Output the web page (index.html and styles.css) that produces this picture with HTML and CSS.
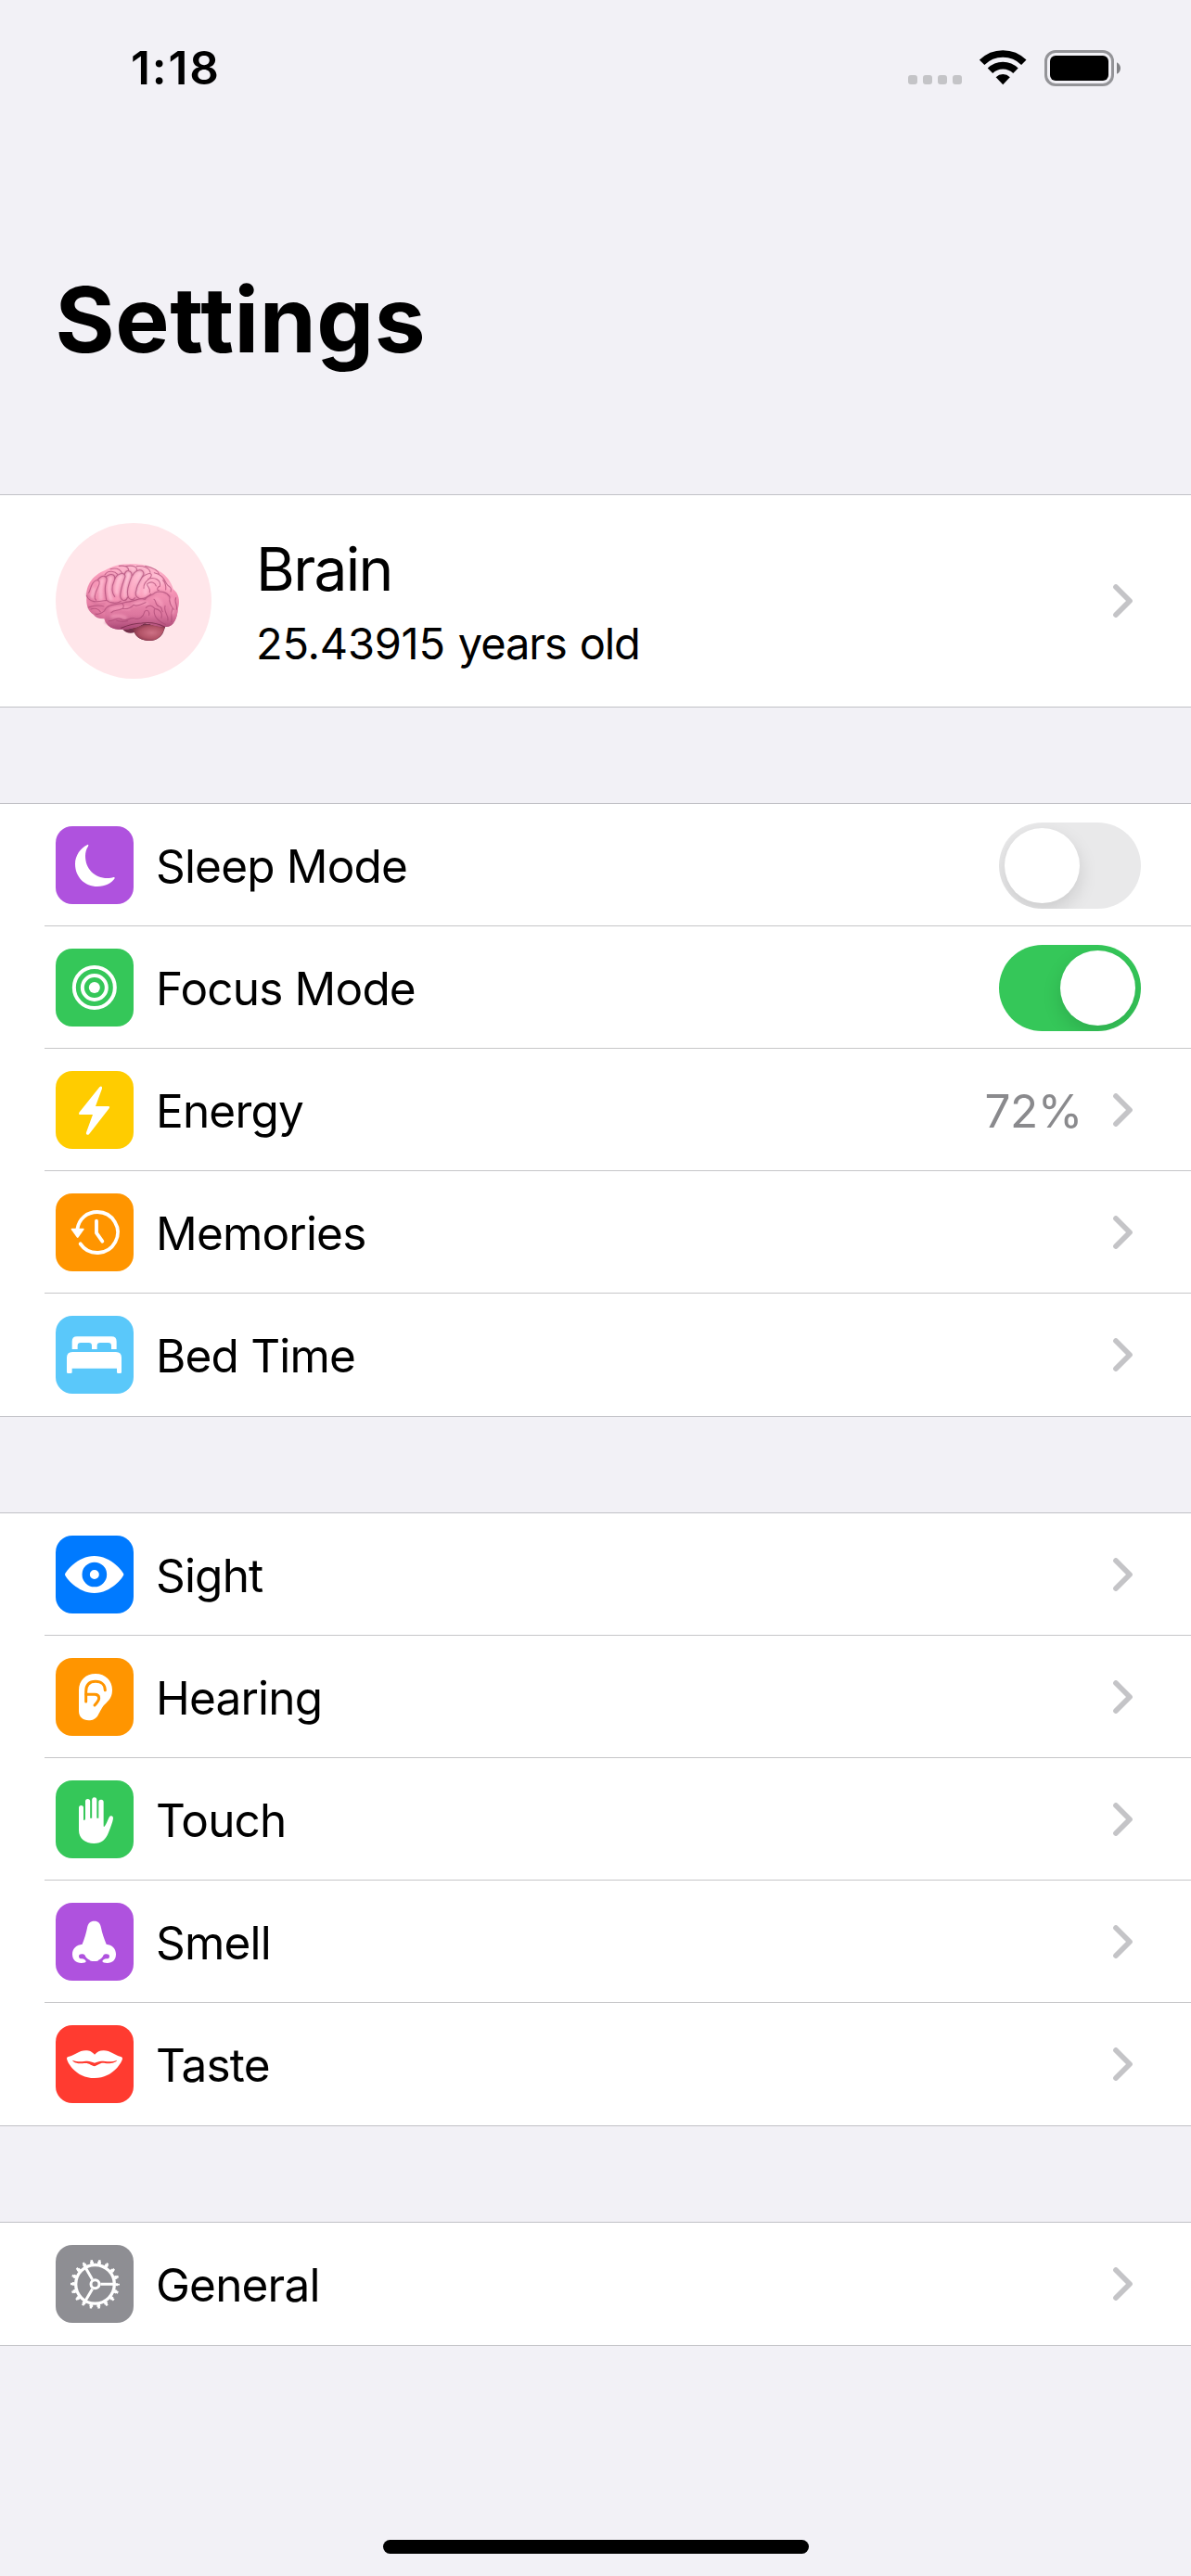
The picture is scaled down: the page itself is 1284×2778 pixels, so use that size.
FILE: index.html
```
<!DOCTYPE html>
<html lang="en">
<head>
<meta charset="utf-8">
<title>Settings</title>
<link rel="stylesheet" href="styles.css">
</head>
<body>
<svg class="defs" aria-hidden="true">
  <symbol id="chevron" viewBox="0 0 63 108"><path d="M9 9L54 54L9 99" fill="none" stroke="#c4c4c7" stroke-width="17" stroke-linecap="round" stroke-linejoin="round"/></symbol>
</svg>

<div class="screen">
  <header class="status">
    <span class="time">1:18</span>
    <div class="indicators">
      <div class="signal"><i></i><i></i><i></i><i></i></div>
      <svg class="wifi" viewBox="0 0 151 112"><g fill="none" stroke="#000" stroke-width="23"><path d="M8 40A96 96 0 0 1 143.500 40"/><path d="M34.500 67A58 58 0 0 1 117 67"/></g><path d="M53 87.500A33 33 0 0 1 98.500 87.500L75.800 112Z"/></svg>
      <div class="battery"><div class="cell"><div class="charge"></div></div><svg class="nub" viewBox="0 0 12 38"><path d="M0 0C8 4 12 11 12 19S8 34 0 38Z" fill="#818185"/></svg></div>
    </div>
  </header>

  <h1 class="title">Settings</h1>

  <main class="groups">
    <section class="group">
      <div class="profile">
        <div class="avatar">
          <svg class="brain" viewBox="0 0 360 312">
            <defs>
              <radialGradient id="cortex" cx=".55" cy=".12" r=".95"><stop offset="0" stop-color="#ffc0d4"/><stop offset=".42" stop-color="#fb9fbd"/><stop offset=".75" stop-color="#e87fa5"/><stop offset="1" stop-color="#b04f7c"/></radialGradient>
              <linearGradient id="lobe" x1="0" y1="0" x2="0" y2="1"><stop offset="0" stop-color="#f593b5"/><stop offset=".6" stop-color="#dc769e"/><stop offset="1" stop-color="#a84674"/></linearGradient>
              <radialGradient id="stem" cx=".6" cy=".5" r=".6"><stop offset="0" stop-color="#cd7084"/><stop offset=".6" stop-color="#b35468"/><stop offset="1" stop-color="#803248"/></radialGradient>
              <filter id="soft" x="-5%" y="-5%" width="110%" height="110%"><feGaussianBlur stdDeviation="2.500"/></filter>
              <filter id="softer" x="-5%" y="-5%" width="110%" height="110%"><feGaussianBlur stdDeviation="4"/></filter>
            </defs>
            <path d="M143 246C155 262 172 262 183 258C188 274 206 285 232 285C257 285 270 271 276 258L283 239L215 228Z" fill="#74304a"/>
            <path d="M176 244C184 270 202 285 230 285C258 285 273 269 281 240C245 230 202 230 176 244Z" fill="url(#stem)"/>
            <path d="M28 145C24 105 50 71 88 57C110 45 133 37 163 37C195 34 226 41 250 53C280 66 300 88 308 118C326 132 331 156 324 180C322 210 311 239 286 240C260 242 241 231 216 228C190 245 154 252 120 247C101 243 88 229 85 214C70 215 57 209 50 200C33 190 26 170 28 145Z" fill="url(#cortex)"/>
            <path d="M88 190C92 170 122 165 150 162C181 158 196 145 221 147C240 133 270 124 295 136C317 130 328 160 323 180C322 211 310 240 286 240C260 242 241 231 216 228C190 245 154 252 120 247C96 242 84 219 88 190Z" fill="url(#lobe)"/>
            <g fill="none" stroke-linecap="round" stroke-linejoin="round">
              <g stroke="#ffd5e3" stroke-width="9" opacity=".6" filter="url(#softer)"><path d="M51 116L45 144M78 88Q71 120 74 150M105 82Q98 118 106 152M142 67Q123 102 126 132M164 67Q151 107 156 143M205 74Q190 105 192 132M230 100Q213 126 219 134M245 73Q264 72 270 100M292 99L299 116"/><path d="M106 183Q138 173 165 180M180 168Q204 160 225 165M250 149Q267 150 270 170M302 149Q309 170 306 195M110 207Q135 201 155 211" stroke="#ffadc8"/></g>
              <g stroke="#c4628d" stroke-width="7" opacity=".45" filter="url(#soft)">
                <path d="M64 88C82 67 99 76 91 98C84 120 90 137 92 153C102 164 127 166 139 157"/>
                <path d="M92 77C110 64 125 72 117 92C107 112 110 132 119 142"/>
                <path d="M119 86C126 67 151 60 153 77C145 100 137 118 137 142C142 158 155 159 161 144"/>
                <path d="M151 71C154 51 177 57 174 77C164 101 157 122 161 138C164 153 179 156 184 146"/>
                <path d="M176 75C190 49 213 53 213 70C203 88 190 105 189 121C184 133 187 143 198 148"/>
                <path d="M86 188C94 163 133 169 156 160C184 159 198 143 217 151C224 137 244 138 249 130C266 121 288 128 297 143"/>
                <path d="M29 134C46 157 48 172 88 165M36 178C50 169 77 174 84 186"/>
                <path d="M89 226C125 238 147 217 173 224C201 230 213 219 216 207"/>
              </g>
              <g stroke="#a84672" stroke-width="3.300" opacity=".66">
                <path d="M35 130C43 117 41 97 58 90C72 86 72 98 65 112C56 130 51 149 59 154"/>
                <path d="M64 88C82 67 99 76 91 98C84 120 90 137 92 153C102 164 127 166 139 157"/>
                <path d="M92 77C110 64 125 72 117 92C107 112 110 132 119 142"/>
                <path d="M119 86C126 67 151 60 153 77C145 100 137 118 137 142C142 158 155 159 161 144"/>
                <path d="M151 71C154 51 177 57 174 77C164 101 157 122 161 138C164 153 179 156 184 146"/>
                <path d="M176 75C190 49 213 53 213 70C203 88 190 105 189 121C184 133 187 143 198 148C212 151 228 143 236 134"/>
                <path d="M208 79C235 59 246 68 231 84C220 94 212 100 213 115M227 85C250 77 270 91 265 109C252 113 258 125 262 121"/>
                <path d="M232 129C236 111 222 111 224 101C238 90 250 98 253 108M247 65C278 72 279 91 290 105C301 113 303 117 300 126M275 89Q286 100 284 120"/>
                <path d="M87 72C98 53 122 62 128 70M105 53C123 48 136 53 143 66M133 43C150 41 164 45 164 57M153 44C182 39 193 47 190 59M190 44C211 42 231 48 234 64M218 43C243 49 259 57 262 69"/>
                <path d="M28 139C39 166 68 158 92 154M34 177C49 174 59 166 84 174M42 183C53 178 68 181 73 192M57 198Q69 202 84 190"/>
                <path d="M86 188C94 163 133 169 156 160C184 159 198 143 217 151C224 137 244 138 249 130C266 121 288 128 297 143C293 161 302 173 310 184"/>
                <path d="M108 194C119 182 127 191 144 181C164 184 174 176 180 169C193 177 206 166 219 161M145 181Q151 171 144 166"/>
                <path d="M100 221C118 222 127 207 140 215C155 225 164 211 181 212C199 219 212 207 216 190C225 182 232 190 230 202M125 220Q144 226 161 221"/>
                <path d="M246 151C255 156 248 170 263 174C276 177 267 186 274 191M220 178C231 166 241 173 249 181C263 183 275 194 270 211M247 184C244 207 260 222 283 232M282 172C276 192 294 201 291 219M317 146C310 159 324 171 319 184M306 181C297 201 307 213 302 224"/>
                <path d="M140 244Q174 229 206 228Q246 222 280 240" stroke="#642039"/>
              </g>
            </g>
          </svg>
        </div>
        <div class="who"><span class="name">Brain</span><span class="age"><span class="number">25.43915</span> years old</span></div>
        <svg class="chevron"><use href="#chevron"/></svg>
      </div>
    </section>

    <section class="group">
      <div class="row toggle-row">
        <svg class="icon purple" viewBox="0 0 252 252"><path d="M103 60C80 71 63 95 63 122C63 164 94 195 135 195C161 195 181 184 191 169Q192 164 187 165C182 167 175 168 167 168C126 168 96 138 96 96C96 84 99 74 105 65Q108 58 103 60Z"/></svg>
        <span class="label">Sleep Mode</span>
        <div class="switch"><div class="knob"></div></div>
      </div>
      <div class="row toggle-row">
        <svg class="icon green" viewBox="0 0 252 252"><g class="line" stroke-width="12"><circle cx="125.500" cy="126" r="66"/><circle cx="125.500" cy="126" r="39"/></g><circle cx="125.500" cy="126" r="18"/></svg>
        <span class="label">Focus Mode</span>
        <div class="switch on"><div class="knob"></div></div>
      </div>
      <div class="row">
        <svg class="icon yellow" viewBox="0 0 252 252"><path d="M142 52L76 134Q73 141 80 141H120L99 199C97 207 104 209 109 203L173 121Q177 114 170 114H129L150 57C151 49 146 48 142 52Z"/></svg>
        <span class="label">Energy</span>
        <span class="value">72%</span>
        <svg class="chevron"><use href="#chevron"/></svg>
      </div>
      <div class="row">
        <svg class="icon orange" viewBox="0 0 252 252"><g class="line" stroke-width="11.500"><path d="M70 116C75 82 101 60 135 60A66 66 0 1 1 80 163"/><path d="M132 89V128L151 155"/></g><path d="M52 113H90Q94 113 91 118L74 142Q71 146 68 142L51 118Q48 113 52 113Z"/></svg>
        <span class="label">Memories</span>
        <svg class="chevron"><use href="#chevron"/></svg>
      </div>
      <div class="row">
        <svg class="icon sky" viewBox="0 0 252 252"><path d="M53 108V83Q53 67 69 67H181Q197 67 197 83V108H180V97Q180 87 170 87H144Q134 87 134 97V108H117V97Q117 87 107 87H81Q71 87 71 97V108Z"/><path d="M36 182V135Q36 117 54 117H195Q213 117 213 135V182Q213 186 209 186H202Q198 186 198 182V170H53V182Q53 186 49 186H40Q36 186 36 182Z"/></svg>
        <span class="label">Bed Time</span>
        <svg class="chevron"><use href="#chevron"/></svg>
      </div>
    </section>

    <section class="group">
      <div class="row">
        <svg class="icon blue" viewBox="0 0 252 252"><path d="M30 126C30 118 71 66 125 66S220 118 220 126S179 186 125 186S30 134 30 126Z"/><circle cx="125.500" cy="126" r="27.500" fill="none" stroke="#007aff" stroke-width="25"/></svg>
        <span class="label">Sight</span>
        <svg class="chevron"><use href="#chevron"/></svg>
      </div>
      <div class="row">
        <svg class="icon orange" viewBox="0 0 252 252"><path d="M75 105C75 72 97 51 129 51C161 51 183 74 183 103C183 123 177 133 163 146C149 158 145 172 137 185C130 197 119 202 107 202C88 202 75 191 75 172Z"/><g class="line" stroke="#ff9500" stroke-width="9"><path d="M98 141V109C98 88 109 76 129 76C149 76 160 88 160 104"/><path d="M98 118H126Q140 118 140 130Q140 139 126 153"/></g></svg>
        <span class="label">Hearing</span>
        <svg class="chevron"><use href="#chevron"/></svg>
      </div>
      <div class="row">
        <svg class="icon green" viewBox="0 0 252 252"><path d="M75 162V88.500A7.500 7.500 0 0 1 90 88.500V126Q90 130 93 129Q96 128 96 124V67.500A7.500 7.500 0 0 1 111.500 67.500V122H117.500V61.500A7.800 7.800 0 0 1 133 61.500V122H139V70.500A7.800 7.800 0 0 1 155 70.500V147Q155 152 159 148C164 141 169 127 173 119Q176 114 181 115Q187 117 186 124C184 136 178 152 171 169C162 192 149 204 124 204C96 204 75 188 75 162Z"/></svg>
        <span class="label">Touch</span>
        <svg class="chevron"><use href="#chevron"/></svg>
      </div>
      <div class="row">
        <svg class="icon purple" viewBox="0 0 252 252"><path d="M125 59C138 59 144 66 147 81C150 98 157 117 164 134C182 136 195 148 195 166C195 185 184 195 167 195C158 195 152 193 150 189C144 186 138 189 125 189S106 186 100 189C98 193 92 195 83 195C66 195 54 185 54 166C54 148 68 136 86 134C93 117 99 98 102 81C105 66 112 59 125 59Z"/><g fill="#af52de"><path d="M75 173C75 164 90 165 94 169C97 178 105 184 113 187Q107 193 99 193C97 184 92 181 84 181C78 181 75 178 75 173Z"/><path d="M174 173C174 164 159 165 155 169C152 178 144 184 136 187Q142 193 150 193C152 184 157 181 165 181C171 181 174 178 174 173Z"/></g></svg>
        <span class="label">Smell</span>
        <svg class="chevron"><use href="#chevron"/></svg>
      </div>
      <div class="row">
        <svg class="icon red" viewBox="0 0 252 252"><path d="M36 107C36 103 39 102 44 101C64 97 74 82 97 82C111 82 117 86 126 95C135 86 142 82 155 82C178 82 190 97 208 101C213 102 216 103 216 108C216 116 188 171 126 171S36 118 36 107Z"/><path d="M54 113C66 118 80 119 92 117C108 114 114 118 126 122C138 118 142 114 160 117C175 119 188 118 198 113C197 121 175 126 160 123C142 120 138 130 126 133C114 130 108 121 92 123C78 126 57 122 54 113Z" fill="#ff3b30"/></svg>
        <span class="label">Taste</span>
        <svg class="chevron"><use href="#chevron"/></svg>
      </div>
    </section>

    <section class="group">
      <div class="row">
        <svg class="icon gray" viewBox="0 0 252 252"><g fill="none" stroke="#fff"><circle cx="127.500" cy="127" r="62.500" stroke-width="10"/><circle cx="127.500" cy="127" r="70" stroke-width="8" pathLength="18" stroke-dasharray=".46 .54" stroke-dashoffset=".23"/><circle cx="127.500" cy="127" r="75" stroke-width="9" pathLength="18" stroke-dasharray=".28 .72" stroke-dashoffset=".14"/><circle cx="127.500" cy="127" r="13.500" stroke-width="9"/><path d="M145 127H188M118.700 111.800L97 74.500M118.700 142.200L97 179.500" stroke-width="9"/></g></svg>
        <span class="label">General</span>
        <svg class="chevron"><use href="#chevron"/></svg>
      </div>
    </section>
  </main>

  <footer class="home"><div class="home-bar"></div></footer>
</div>
</body>
</html>
```

FILE: styles.css
```
* { box-sizing: border-box; }

body {
  margin: 0;
  background: #f2f1f6;
  color: #000;
  font-family: Inter, "Liberation Sans", sans-serif;
}

.defs { display: none; }

.screen {
  display: flex;
  flex-direction: column;
  width: 1284px;
  height: 2778px;
  overflow: hidden;
}

/* Status bar */
.status {
  display: flex;
  align-items: center;
  justify-content: space-between;
  height: 146px;
  padding: 0 76px 0 141px;
}

.time {
  font-size: 49.5px;
  font-weight: 600;
  letter-spacing: 1.9px;
  line-height: 60px;
}

.indicators { display: flex; align-items: center; }

.signal { display: flex; gap: 6px; margin: 26px 19px 0 0; }

.signal i {
  width: 10px;
  height: 10px;
  border-radius: 3px;
  background: #c4c4c7;
}

.wifi { width: 50.300px; height: 37.300px; margin-right: 19.400px; }

.battery { display: flex; align-items: center; gap: 3px; }

.cell {
  width: 75px;
  height: 39px;
  padding: 3px;
  border: 3px solid #949498;
  border-radius: 12px;
}

.charge { height: 100%; border-radius: 6px; background: #000; }

.nub { width: 4px; height: 13px; }

/* Large title */
.title {
  margin: 139px 0 128px 59.500px;
  font-size: 98px;
  font-weight: 700;
  letter-spacing: .55px;
  line-height: 120px;
}

/* Groups */
.groups { display: flex; flex-direction: column; gap: 103px; }

.group {
  border: solid #c1c1c6;
  border-width: 1px 0;
  background: #fff;
}

.row {
  display: flex;
  align-items: center;
  height: 132px;
  margin-left: 48px;
  padding: 0 63px 0 12px;
  border-bottom: 1px solid #c6c6c8;
}

.row:last-child { border-bottom: 0; }

.toggle-row { padding-right: 54px; }

.icon {
  flex: none;
  width: 84px;
  height: 84px;
  margin-right: 24px;
  border-radius: 18px;
  fill: #fff;
}

.line { fill: none; stroke-linecap: round; stroke-linejoin: round; }
.line:not([stroke]) { stroke: #fff; }

.purple { background: #af52de; }
.green { background: #35c759; }
.yellow { background: #ffcc00; }
.orange { background: #ff9500; }
.sky { background: #5ac8fa; }
.blue { background: #007aff; }
.red { background: #ff3b30; }
.gray { background: #8e8e93; }

.label,
.value {
  padding-top: 2px;
  font-size: 49.5px;
  line-height: 60px;
  white-space: nowrap;
}

.label { flex: 1; letter-spacing: -.82px; }

.value { margin-right: 33px; color: #8a8a8d; letter-spacing: -.45px; }

.chevron { flex: none; width: 21px; height: 36px; }

/* Switches */
.switch {
  display: flex;
  width: 153px;
  height: 93px;
  margin-top: 2px;
  padding: 6px;
  overflow: hidden;
  border-radius: 47px;
  background: #e9e9ea;
}

.switch.on { justify-content: flex-end; background: #35c759; }

.knob {
  width: 81px;
  height: 81px;
  border-radius: 50%;
  background: #fff;
  box-shadow: 0 8px 20px rgba(0, 0, 0, .13);
}

/* Profile */
.profile {
  display: flex;
  align-items: center;
  height: 228px;
  padding: 0 63px 0 60px;
}

.avatar {
  display: grid;
  place-items: center;
  width: 168px;
  height: 168px;
  margin-right: 48px;
  border-radius: 50%;
  background: #ffe6ea;
}

.brain { width: 120px; height: 104px; }

.who {
  display: flex;
  flex: 1;
  flex-direction: column;
  padding-top: 12px;
  line-height: 80px;
}

.name { font-size: 64px; letter-spacing: -1.7px; }
.age { font-size: 47px; letter-spacing: -1.1px; word-spacing: 2px; }
.number { letter-spacing: -.25px; }

/* Home indicator */
.home {
  display: flex;
  flex: 1;
  align-items: flex-end;
  justify-content: center;
  padding-bottom: 24px;
}

.home-bar { width: 459px; height: 15px; border-radius: 8px; background: #000; }
```
